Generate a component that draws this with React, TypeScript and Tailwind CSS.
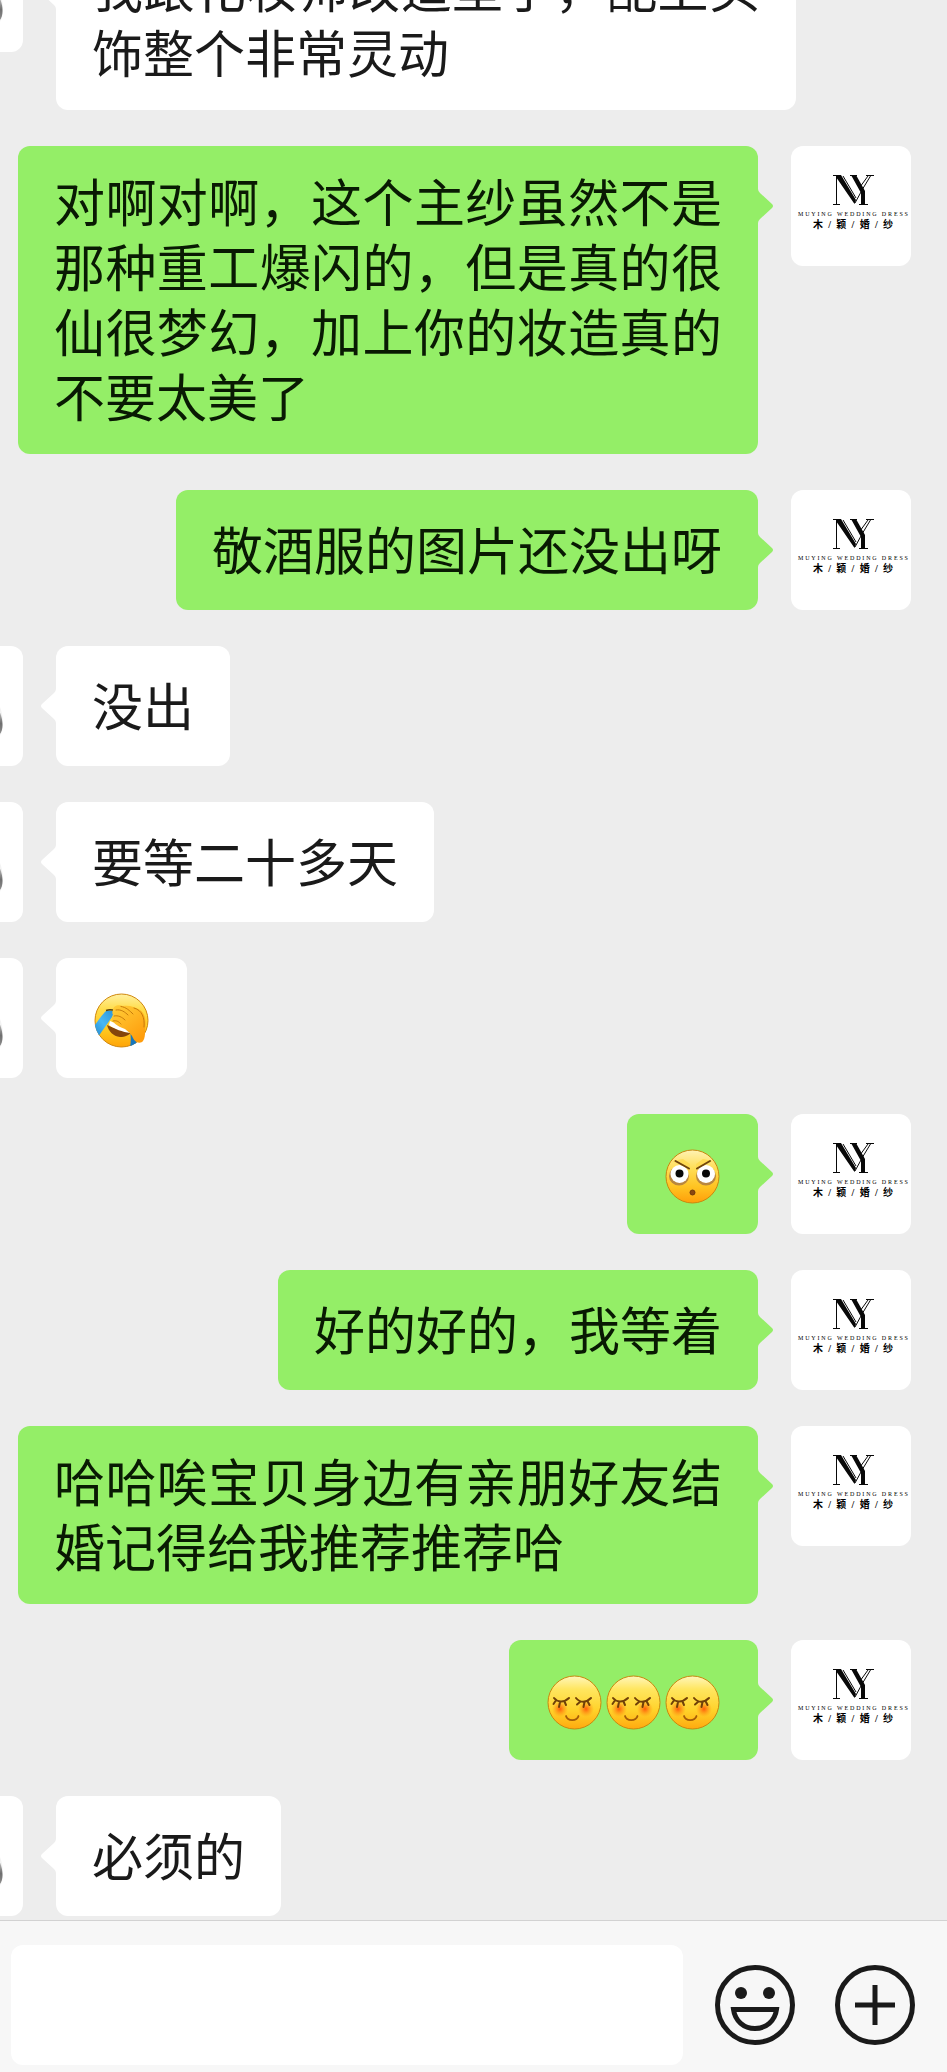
type Sender = "me" | "friend";
type EmojiName = "facepalm" | "glare" | "shy";

interface Message {
  id: number;
  from: Sender;
  text?: string;
  emojis?: EmojiName[];
}

function FacepalmEmoji() {
  return (
    <svg className="h-[59px] w-[59px]" viewBox="0 0 59 59" role="img" aria-label="捂脸">
      <defs>
        <linearGradient id="facepalm-skin" x1="0" y1="0" x2="0" y2="1">
          <stop offset="0" stopColor="#fff0a0" />
          <stop offset="0.3" stopColor="#ffdc48" />
          <stop offset="0.7" stopColor="#ffc61c" />
          <stop offset="1" stopColor="#ffa408" />
        </linearGradient>
        <linearGradient id="facepalm-hand" x1="0" y1="0" x2="0.7" y2="1">
          <stop offset="0" stopColor="#ffcf3a" />
          <stop offset="1" stopColor="#ff9d0c" />
        </linearGradient>
        <linearGradient id="facepalm-tear" x1="1" y1="0" x2="0" y2="1">
          <stop offset="0" stopColor="#2b93d8" />
          <stop offset="0.5" stopColor="#48b8f4" />
          <stop offset="1" stopColor="#1c82cc" />
        </linearGradient>
        <clipPath id="facepalm-clip">
          <circle cx="29.5" cy="29.5" r="27" />
        </clipPath>
      </defs>
      <circle cx="29.5" cy="29.5" r="26.5" fill="url(#facepalm-skin)" stroke="#d0880f" />
      <g clipPath="url(#facepalm-clip)">
        <path d="M15 34C22 38 32 39 40 40C38 44 33 46 28 46C21 45 17 41 15 34Z" fill="#85450c" />
        <path d="M18 30L40 39L38 42C31 41 22 38 17 34Z" fill="#fff" />
        <path
          d="M14 20C18 19 22 20 22 21L20 26L6 46L1 37C3 34 9 25 14 20Z"
          fill="url(#facepalm-tear)"
        />
        <path d="M38 40L45 44L44 57H38C39 50 39 45 38 40Z" fill="#1676bd" />
      </g>
      <path d="M14 19.5C17 18.5 20 18.5 23 20" fill="none" stroke="#57400f" strokeWidth="1.5" />
      <path
        d="M21 19C21 15 26 13 31 15C37 14 43 16 48 19C54 23 54 32 53 39C53 44 53 47 51 50C49 53 43 52 41 47C40 44 38 42 33 38C28 36 23 34 21 30C19 27 20 25 22 25C20 23 20 21 21 19Z"
        fill="url(#facepalm-hand)"
      />
      <path
        d="M24 19C29 18 33 21 36 24M29 15.500C34 16 38 20 41 23M22 25C26 24 30 26 33 29M21 30C25 29 27 31 29 33M42 17C50 19 53 27 52 36"
        fill="none"
        stroke="#c77c0c"
        strokeWidth="1"
        strokeLinecap="round"
      />
    </svg>
  );
}

function GlareEmoji() {
  return (
    <svg className="h-[59px] w-[59px]" viewBox="0 0 59 59" role="img" aria-label="瞪眼">
      <defs>
        <linearGradient id="glare-skin" x1="0" y1="0" x2="0" y2="1">
          <stop offset="0" stopColor="#fff3b4" />
          <stop offset="0.35" stopColor="#ffdd55" />
          <stop offset="0.7" stopColor="#ffc321" />
          <stop offset="1" stopColor="#ff9e0a" />
        </linearGradient>
      </defs>
      <circle cx="29.5" cy="29.5" r="26.5" fill="url(#glare-skin)" stroke="#c9880f" />
      <ellipse cx="16" cy="29" rx="10" ry="9.5" fill="#b9873f" />
      <ellipse cx="43" cy="29" rx="10" ry="9.5" fill="#b9873f" />
      <circle cx="16.5" cy="27" r="9" fill="#fff" />
      <circle cx="43" cy="27" r="9" fill="#fff" />
      <path d="M9 14L27 22V17L20 12ZM50 14L33 22V17L40 12Z" fill="#ffdc55" />
      <circle cx="16.5" cy="26.5" r="4" fill="#080808" />
      <circle cx="43" cy="26.5" r="4" fill="#080808" />
      <path
        d="M12.500 14L26 21.500M47 14L34 21.500"
        stroke="#70450d"
        strokeWidth="2"
        strokeLinecap="round"
      />
      <circle cx="29.5" cy="45.5" r="2.5" fill="#8a4710" stroke="#70380c" />
    </svg>
  );
}

function ShyEmoji() {
  return (
    <svg className="h-[59px] w-[59px]" viewBox="0 0 59 59" role="img" aria-label="害羞">
      <defs>
        <linearGradient id="shy-skin" x1="0" y1="0" x2="0" y2="1">
          <stop offset="0" stopColor="#fff6bc" />
          <stop offset="0.25" stopColor="#ffe660" />
          <stop offset="0.65" stopColor="#ffd229" />
          <stop offset="1" stopColor="#ffa90f" />
        </linearGradient>
        <radialGradient id="shy-blush">
          <stop offset="0" stopColor="#ff5508" stopOpacity="0.95" />
          <stop offset="1" stopColor="#ff8a12" stopOpacity="0" />
        </radialGradient>
      </defs>
      <circle cx="29.5" cy="29.5" r="26.5" fill="url(#shy-skin)" stroke="#c9880f" />
      <circle cx="15" cy="36" r="8" fill="url(#shy-blush)" />
      <circle cx="41" cy="36" r="8" fill="url(#shy-blush)" />
      <path
        d="M9 25C12 29 19 30 24 25M10.500 28L8.500 31M15 29L14 34M19.500 28.500L21 32M31 25C35 30 41 30 46 25M35.500 28.500L32 31.500M39.500 29L38.500 34M42.500 28L44.500 32"
        fill="none"
        stroke="#704008"
        strokeWidth="2"
        strokeLinecap="round"
      />
      <path
        d="M21 43C22.500 48.500 32 48.500 33.500 43"
        fill="none"
        stroke="#a45b08"
        strokeWidth="1.8"
        strokeLinecap="round"
      />
    </svg>
  );
}

const emojiIcons = {
  facepalm: FacepalmEmoji,
  glare: GlareEmoji,
  shy: ShyEmoji,
};

const messages: Message[] = [
  { id: 1, from: "friend", text: "我跟化妆师改造型了，配上头饰整个非常灵动" },
  {
    id: 2,
    from: "me",
    text: "对啊对啊，这个主纱虽然不是那种重工爆闪的，但是真的很仙很梦幻，加上你的妆造真的不要太美了",
  },
  { id: 3, from: "me", text: "敬酒服的图片还没出呀" },
  { id: 4, from: "friend", text: "没出" },
  { id: 5, from: "friend", text: "要等二十多天" },
  { id: 6, from: "friend", emojis: ["facepalm"] },
  { id: 7, from: "me", emojis: ["glare"] },
  { id: 8, from: "me", text: "好的好的，我等着" },
  { id: 9, from: "me", text: "哈哈唉宝贝身边有亲朋好友结婚记得给我推荐推荐哈" },
  { id: 10, from: "me", emojis: ["shy", "shy", "shy"] },
  { id: 11, from: "friend", text: "必须的" },
];

function ShopAvatar() {
  return (
    <div className="flex h-[120px] w-[120px] shrink-0 flex-col items-center overflow-hidden rounded-xl bg-white pt-7 pl-1 text-black">
      <svg className="h-8 w-[42px]" viewBox="0 0 42 32" aria-hidden="true">
        <path
          d="M1 1.500H9M4.500 2V30M1 30.500H8M27 30.500H36M18 1.500H25M34 1.500H42M11 2L24 24M30 16L38.500 2M28 13L36 2"
          fill="none"
          stroke="#080808"
          strokeWidth="1"
        />
        <path d="M4 1H9L24 26L22.500 30L4 3ZM19 1H24L33 17V31H29V19Z" fill="#080808" />
        <path d="M23 29L29 18" stroke="#080808" strokeWidth="1" />
      </svg>
      <div className="mt-1 flex w-[110px] justify-between font-['Liberation_Serif',serif] text-[6px] leading-[8px]">
        {"MUYING WEDDING DRESS".split("").map((letter, i) => (
          <span key={i}>{letter === " " ? "\u00a0" : letter}</span>
        ))}
      </div>
      <div className="flex w-20 justify-between font-['Liberation_Serif','Noto_Sans_CJK_SC',serif] text-[10px] leading-[14px] font-bold">
        {"木/颖/婚/纱".split("").map((char, i) => (
          <span key={i}>{char}</span>
        ))}
      </div>
    </div>
  );
}

function FriendAvatar() {
  return (
    <div className="h-[120px] w-[120px] shrink-0 overflow-hidden rounded-xl bg-white">
      <svg className="h-full w-full" viewBox="0 0 120 120" aria-hidden="true">
        <defs>
          <linearGradient id="avatar-shade" x1="0" y1="0" x2="0" y2="1">
            <stop offset="0" stopColor="#e8e8e8" />
            <stop offset="0.6" stopColor="#6f6f6f" />
            <stop offset="1" stopColor="#8f8f8f" />
          </linearGradient>
        </defs>
        <path d="M90 50C96 55 100 66 100 78C100 85 98 89 95 92L88 86Z" fill="#f3f3f3" />
        <path
          d="M92 60C97 63 99.500 72 99.500 79C99.500 84 98 87 96 89L90 82Z"
          fill="url(#avatar-shade)"
        />
      </svg>
    </div>
  );
}

function BubbleArrow({ from }: { from: Sender }) {
  return from === "me" ? (
    <svg
      className="absolute top-[43px] left-full h-[34px] w-[15px] text-[#94ee67]"
      viewBox="0 0 15 34"
      aria-hidden="true"
    >
      <path d="M0 0Q0 2 2 4L14 15Q16 17 14 19L2 30Q0 32 0 34Z" fill="currentColor" />
    </svg>
  ) : (
    <svg
      className="absolute top-[43px] right-full h-[34px] w-[15px] text-white"
      viewBox="0 0 15 34"
      aria-hidden="true"
    >
      <path d="M15 0Q15 2 13 4L1 15Q-1 17 1 19L13 30Q15 32 15 34Z" fill="currentColor" />
    </svg>
  );
}

function MessageRow({ message }: { message: Message }) {
  const mine = message.from === "me";

  return (
    <li
      className={
        mine
          ? "flex shrink-0 flex-row-reverse items-start gap-[33px] pr-9"
          : "-ml-[97px] flex shrink-0 items-start gap-[33px]"
      }
    >
      {mine ? <ShopAvatar /> : <FriendAvatar />}
      <div
        className={`relative flex min-h-[120px] max-w-[740px] items-center rounded-xl px-9 ${
          mine ? "bg-[#94ee67] text-[#091a03]" : "bg-white text-[#1a1a1a]"
        }`}
      >
        <BubbleArrow from={message.from} />
        {message.text && (
          <p className="pt-[22px] pb-[26px] text-justify text-[51px] leading-[65px]">
            {message.text}
          </p>
        )}
        {message.emojis && (
          <div className="flex pt-7 pb-6">
            {message.emojis.map((name, i) => {
              const Emoji = emojiIcons[name];
              return <Emoji key={i} />;
            })}
          </div>
        )}
      </div>
    </li>
  );
}

function Composer() {
  return (
    <form
      className="flex shrink-0 items-center border-t border-[#d2d2d2] bg-[#f7f7f7] pt-6 pr-8 pb-[7px] pl-[11px] text-[#1a1a1a]"
      onSubmit={(e) => e.preventDefault()}
    >
      <input
        type="text"
        aria-label="输入消息"
        className="h-[120px] min-w-0 flex-1 rounded-xl bg-white px-6 text-[51px] outline-none"
      />
      <button type="button" aria-label="表情" className="ml-8 shrink-0">
        <svg className="h-20 w-20" viewBox="0 0 80 80" fill="none" aria-hidden="true">
          <circle cx="40" cy="40" r="37.5" stroke="currentColor" strokeWidth="5" />
          <circle cx="26" cy="28" r="6" fill="currentColor" />
          <circle cx="54" cy="28" r="6" fill="currentColor" />
          <path
            d="M18.500 44.500H61.500C60 56 51 63.500 40 63.500C29 63.500 20 56 18.500 44.500Z"
            stroke="currentColor"
            strokeWidth="5"
          />
        </svg>
      </button>
      <button type="button" aria-label="更多" className="ml-10 shrink-0">
        <svg className="h-20 w-20" viewBox="0 0 80 80" fill="none" aria-hidden="true">
          <circle cx="40" cy="40" r="37.5" stroke="currentColor" strokeWidth="5" />
          <path d="M40 20V60M20 40H60" stroke="currentColor" strokeWidth="5" />
        </svg>
      </button>
    </form>
  );
}

export default function App() {
  return (
    <div
      lang="zh-CN"
      className="flex h-screen flex-col overflow-hidden bg-[#ededed] font-['Noto_Sans_CJK_SC',sans-serif]"
    >
      <main className="flex min-h-0 flex-1 flex-col justify-end overflow-hidden pb-1">
        <ul className="flex flex-col gap-9">
          {messages.map((message) => (
            <MessageRow key={message.id} message={message} />
          ))}
        </ul>
      </main>
      <Composer />
    </div>
  );
}
